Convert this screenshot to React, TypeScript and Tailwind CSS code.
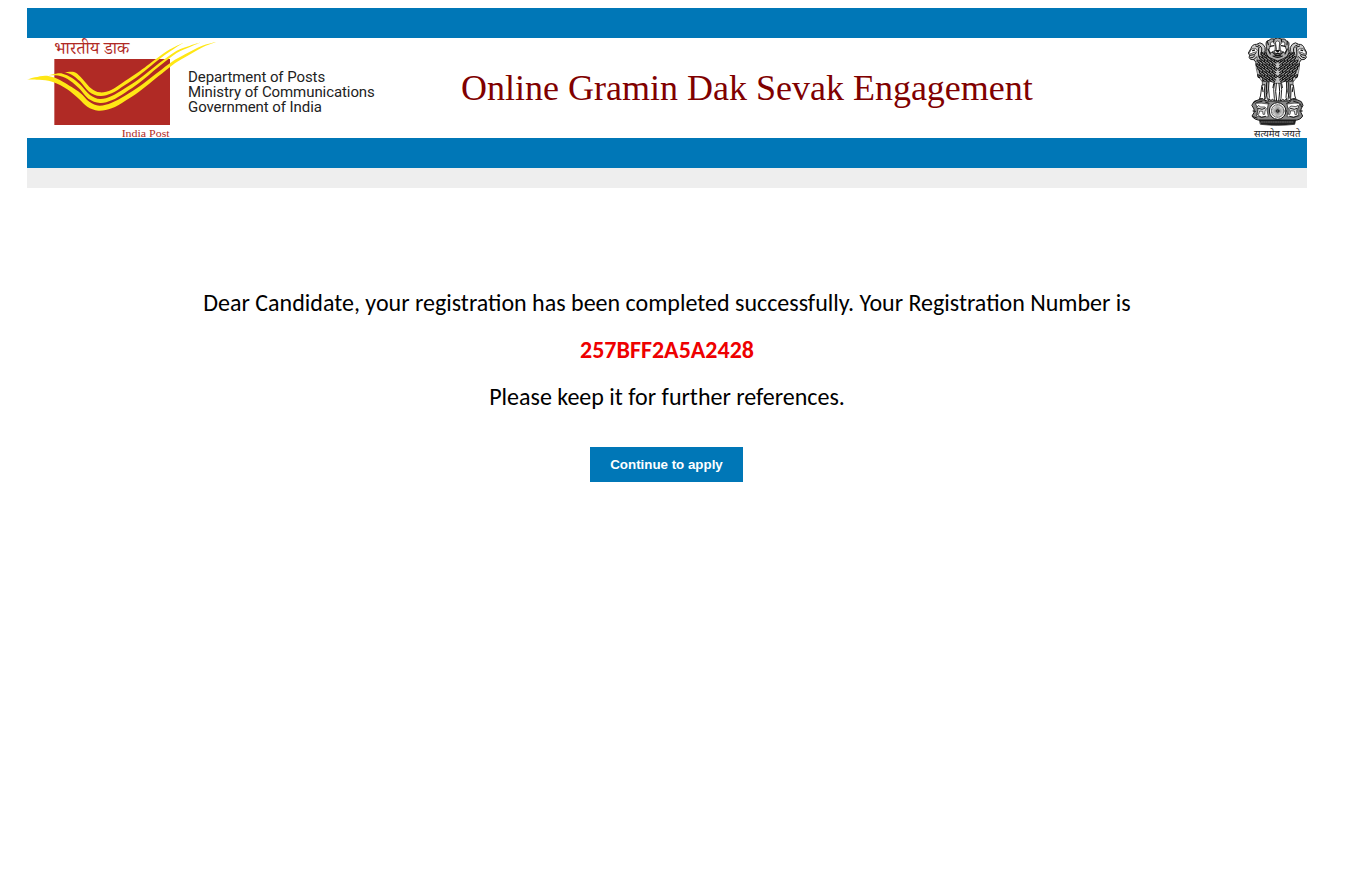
import React from 'react';

type Point = [number, number];

/* Closed outline that is smooth everywhere except at its two tips. */
function ribbon(upper: Point[], lower: Point[]) {
  const smooth = (pts: Point[]) =>
    pts
      .slice(1)
      .map((p, i) => {
        const p0 = pts[Math.max(0, i - 1)];
        const p1 = pts[i];
        const p3 = pts[Math.min(pts.length - 1, i + 2)];
        const c1 = [p1[0] + (p[0] - p0[0]) / 6, p1[1] + (p[1] - p0[1]) / 6];
        const c2 = [p[0] - (p3[0] - p1[0]) / 6, p[1] - (p3[1] - p1[1]) / 6];
        return `C${c1.join(' ')} ${c2.join(' ')} ${p.join(' ')}`;
      })
      .join('');
  const back: Point[] = [upper[upper.length - 1], ...lower, upper[0]];
  return `M${upper[0].join(' ')}${smooth(upper)}${smooth(back)}Z`;
}

const ribbons = [
  ribbon(
    [[133, 127], [162, 126], [182, 141], [212, 174], [240, 187], [275, 179], [315, 153], [360, 123], [415, 82], [450, 58], [490, 38]],
    [[452, 63], [415, 90], [360, 134], [315, 165], [275, 190], [240, 198], [207, 185], [180, 154], [155, 134]],
  ),
  ribbon(
    [[85, 136], [108, 131], [128, 131], [155, 143], [182, 165], [210, 195], [240, 207], [275, 198], [315, 175], [360, 145], [415, 101], [470, 62], [510, 47], [544, 37]],
    [[510, 51], [470, 69], [415, 111], [360, 157], [315, 188], [275, 211], [240, 219], [205, 206], [180, 178], [150, 152], [120, 138]],
  ),
  ribbon(
    [[21, 149], [45, 142], [75, 137], [100, 142], [130, 156], [180, 188], [208, 215], [238, 227], [275, 218], [315, 197], [360, 168], [415, 126], [455, 96], [495, 73], [545, 48], [588, 36]],
    [[545, 53], [495, 82], [455, 107], [415, 139], [360, 183], [315, 213], [275, 235], [235, 242], [202, 230], [178, 208], [150, 184], [120, 165], [85, 152], [50, 149]],
  ),
];

function PostLogo() {
  return (
    <svg className="h-[100px] w-[200px] shrink-0" viewBox="21 24 600 300" role="img" aria-label="India Post">
      <text x="103" y="73" fill="#b02a25" fontSize="53" textLength="225" lengthAdjust="spacingAndGlyphs" fontFamily="'Noto Serif Devanagari', 'Noto Sans Devanagari', 'Noto Sans', serif">भारतीय डाक</text>
      <rect x="103" y="87" width="347" height="198" fill="#b02a25" />
      {ribbons.map((d) => <path key={d} d={d} fill="#ffe715" />)}
      <text x="305" y="321" fill="#b02a25" fontSize="34" textLength="144" lengthAdjust="spacingAndGlyphs" fontFamily="'Liberation Serif', serif">India Post</text>
    </svg>
  );
}

const maneRows = [
  { y: 72, reach: 48 },
  { y: 83, reach: 55 },
  { y: 94, reach: 59 },
  { y: 105, reach: 61 },
  { y: 116, reach: 61 },
  { y: 127, reach: 59 },
  { y: 138, reach: 55 },
  { y: 149, reach: 47 },
];

const locks = maneRows
  .flatMap(({ y, reach }, row) => {
    const out: string[] = [];
    for (let d = 4 + (row % 2) * 5; d < reach; d += 10) {
      out.push(`M${113 - d} ${y + 5}q-6-1-6-9m4 0q2 4 5 5M${113 + d} ${y + 5}q6-1 6-9m-4 0q-2 4-5 5`);
    }
    return out;
  })
  .join('');

const spokes = Array.from({ length: 12 }, (_, i) => {
  const a = (i * Math.PI) / 12;
  const dx = 19 * Math.cos(a);
  const dy = 19 * Math.sin(a);
  return `M${(113 - dx).toFixed(1)} ${(243 - dy).toFixed(1)}L${(113 + dx).toFixed(1)} ${(243 + dy).toFixed(1)}`;
}).join('');

function SideLion() {
  return (
    <g>
      <path fill="#ccc" strokeWidth="2.8" d="M68 42Q60 34 50 43Q37 42 33 55L25 69L29 76L27 83Q31 91 42 89Q48 102 60 105L76 88L75 53Z" />
      <path fill="#fff" strokeWidth="1.8" d="M35 57Q47 51 52 61Q48 68 39 68L32 72L29 69Z" />
      <path fill="none" strokeWidth="3" d="M30 76L43 74L48 68M31 84Q40 84 45 77M54 45Q68 49 65 63Q62 75 67 85M56 55Q54 72 57 90M47 48L58 52M42 88L51 80" />
      <path fill="#111" stroke="none" d="M36 60L44 58L45 62L37 64Z" />
    </g>
  );
}

function Emblem() {
  return (
    <svg className="h-[100px] w-[60px] shrink-0" viewBox="21 24 180 300" role="img" aria-label="State Emblem of India">
      <g stroke="#111" strokeLinejoin="round" strokeLinecap="round">
        <SideLion />
        <g transform="translate(226 0) scale(-1 1)"><SideLion /></g>
        <path fill="#c4c4c4" stroke="#444" strokeWidth="2" d="M74 64Q51 75 48 98Q47 133 65 153Q88 165 113 160Q140 165 162 153Q180 133 178 98Q175 75 151 64Q132 48 113 49Q92 48 74 64Z" />
        <path fill="none" strokeWidth="3.5" d={locks} />
        <path fill="#aaa" strokeWidth="2.8" d="M79 49Q75 32 87 31Q91 24 103 27Q113 20 124 27Q137 24 139 33Q150 34 146 49L147 68Q144 82 130 86L113 93L96 86Q80 81 78 66Z" />
        <path fill="#fff" strokeWidth="2" d="M92 45Q89 36 98 35L106 45L105 61L92 69L87 61ZM134 45Q137 36 128 35L120 45L121 61L134 69L139 61ZM107 36Q113 29 119 36L117 59L124 67L113 72L102 67L109 59Z" />
        <path fill="none" strokeWidth="3.3" d="M90 49L102 47M124 47L136 49M97 66Q105 77 113 69Q121 77 130 66M99 78Q113 86 127 78M82 34L85 44M142 34L141 44M84 57L91 72M142 57L135 72M102 28L101 35M124 28L125 35" />
        <path fill="#111" stroke="none" d="M106 60H120L116 67H110ZM101 72Q113 78 125 72L121 79H105Z" />
        <path fill="#aaa" strokeWidth="2" d="M67 153L91 157L82 190L75 209H61L63 198Q70 177 67 153ZM159 153L135 157L144 190L151 209H165L163 198Q156 177 159 153Z" />
        <path fill="#fff" strokeWidth="2.7" d="M88 153L104 158L101 178L103 205L106 215H84L88 202L86 178ZM138 153L122 158L125 178L123 205L120 215H142L138 202L140 178ZM67 165L75 164L73 183L74 203L71 211H57L61 199ZM159 165L151 164L153 183L152 203L155 211H169L165 199Z" />
        <path fill="none" strokeWidth="3" d="M80 158L79 187L82 208M109 160L107 184L110 214M117 160L119 184L116 214M146 158L147 187L144 208M101 161L99 173M125 161L127 173M87 208L93 211L98 208L104 213M139 208L133 211L128 208L122 213M61 206L68 206M165 206L158 206M67 171L69 185M159 171L157 185" />
        <path fill="#888" strokeWidth="2.9" d="M43 214Q57 206 71 210L82 213H144L157 209Q173 207 184 215L189 226L183 237V248L188 258Q181 271 162 271H65Q43 271 36 258L42 248V237L36 227Z" />
        <path fill="#fff" strokeWidth="1.8" d="M47 220Q62 218 85 222Q77 241 85 260Q64 264 49 258L53 246V235ZM179 220Q164 218 141 222Q149 241 141 260Q162 264 177 258L173 246V235Z" />
        <path fill="#ddd" strokeWidth="2" d="M51 231L56 226L61 231H75L79 236L75 243L74 253H69L68 244L59 243L56 253H51L54 239ZM147 233L153 228L168 230L173 226L176 232L170 240V254H165L163 243L152 242L150 253H145L148 242Z" />
        <path fill="none" strokeWidth="2.8" d="M41 218L48 213M50 217L66 214M76 216L87 220M140 220L151 215M161 214L175 218M39 260L51 264M56 257L64 262L77 259M149 259L161 262L174 257M182 223L184 230M39 243L47 244M179 243H187M55 235L66 238L74 235M151 235L163 238L171 235" />
        <circle cx="113" cy="243" r="25" fill="#fff" strokeWidth="3" />
        <path fill="none" strokeWidth="1.1" d={spokes} />
        <circle cx="113" cy="243" r="19" fill="none" strokeWidth="1.5" />
        <circle cx="113" cy="243" r="4" fill="#555" strokeWidth="1.5" />
        <path fill="#222" strokeWidth="2" d="M59 270H167L164 283Q138 286 113 286Q86 286 62 283Z" />
        <path stroke="#999" strokeWidth="2" strokeDasharray="4 3" d="M64 276H162" />
      </g>
      <text x="42" y="321" fill="#222" fontSize="28" textLength="139" lengthAdjust="spacingAndGlyphs" fontFamily="'Noto Sans Devanagari', 'Noto Sans', sans-serif">सत्यमेव जयते</text>
    </svg>
  );
}

export default function App() {
  return (
    <div className="min-h-[888px] bg-white pt-2 text-black">
      <div className="ml-[27px] w-[1280px]">
        <header className="border-y-[30px] border-[#0077b7]">
          <div className="flex h-[100px]">
            <div className="flex w-[434px] shrink-0">
              <PostLogo />
              <p className="-ml-[39px] pt-[32px] font-[Roboto,sans-serif] text-[15px] leading-[15px] tracking-[-0.08px] whitespace-nowrap text-[#222]">
                Department of Posts<br />Ministry of Communications<br />Government of India
              </p>
            </div>
            <h1 className="flex-1 pt-[30px] font-['Liberation_Serif',serif] text-[36px] leading-[40px] whitespace-nowrap text-[#800000]">Online Gramin Dak Sevak Engagement</h1>
            <Emblem />
          </div>
        </header>
        <div className="h-5 bg-[#eeeeee]" />
        <main className="flex flex-col items-center pt-[91px] font-[Calibri,Carlito,Lato,sans-serif] text-[24px] leading-[47px] whitespace-nowrap">
          <p>Dear Candidate, your registration has been completed successfully. Your Registration Number is</p>
          <p className="font-bold text-[#ee0000]">257BFF2A5A2428</p>
          <p>Please keep it for further references.</p>
          <button className="mt-[27px] mr-px h-[35px] w-[153px] bg-[#0077b7] font-['Liberation_Sans',sans-serif] text-[13.33px] leading-[35px] font-bold text-white">Continue to apply</button>
        </main>
      </div>
    </div>
  );
}
